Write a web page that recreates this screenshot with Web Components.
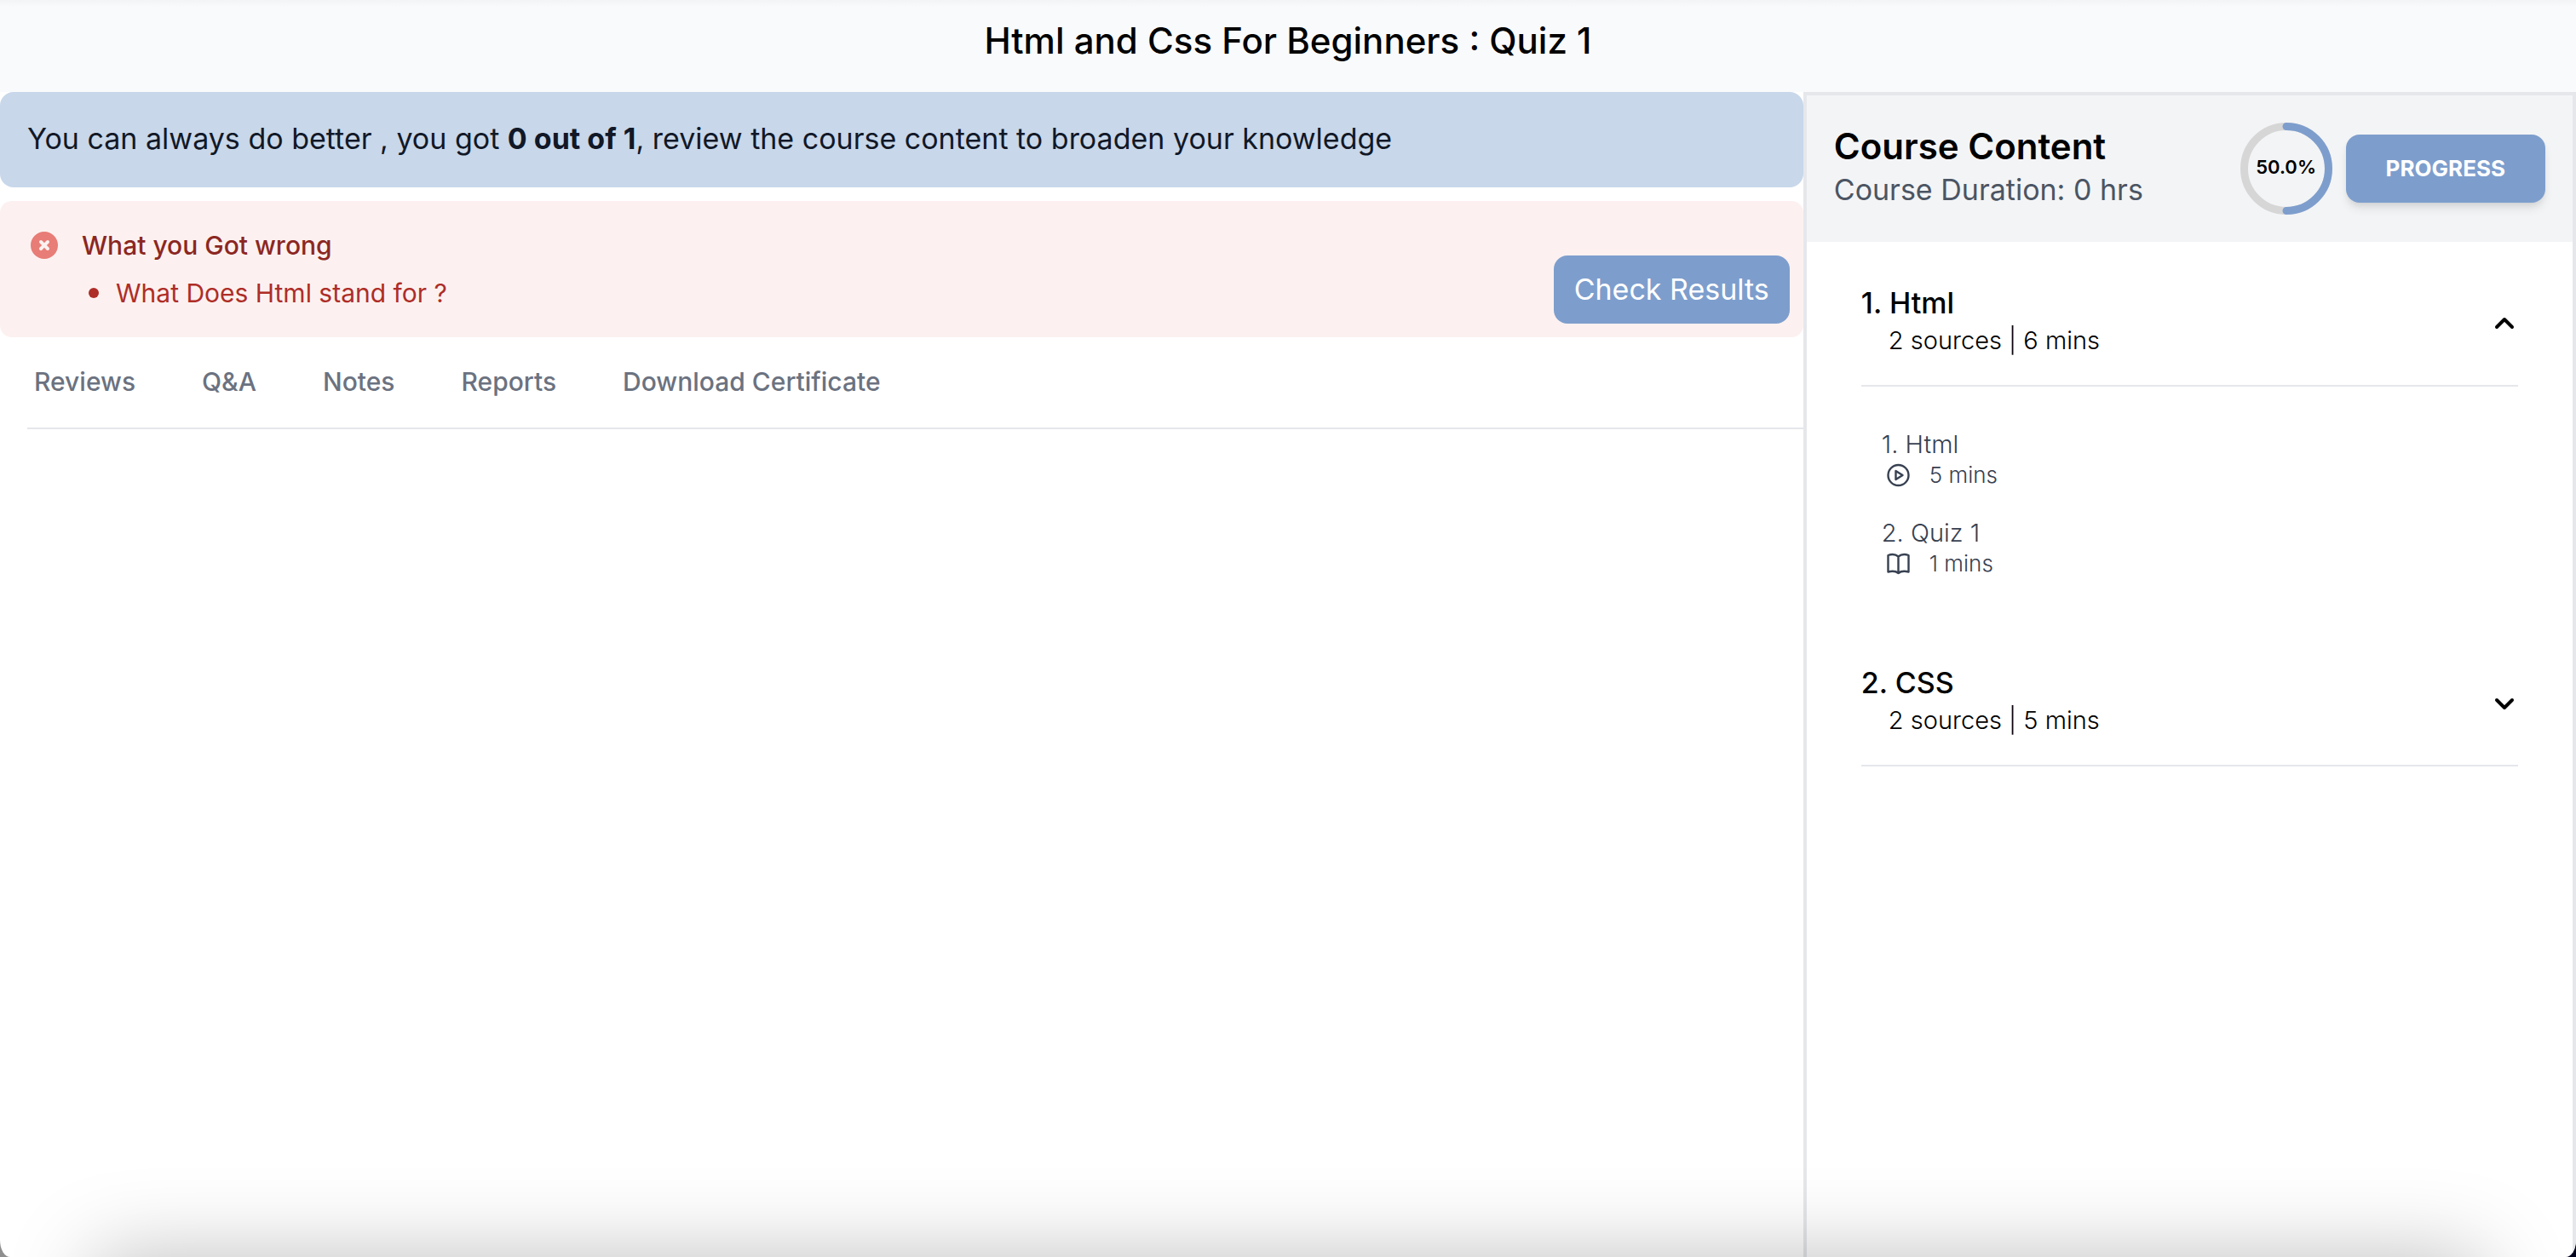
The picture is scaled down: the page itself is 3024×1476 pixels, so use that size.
<!DOCTYPE html>
<html lang="en">
<head>
<meta charset="utf-8">
<title>Html and Css For Beginners : Quiz 1</title>
<style>
  html { background: linear-gradient(90deg, #8f8f8f 50%, #02021f 50%); }
  body {
    margin: 0;
    font-family: Inter, "Open Sans", sans-serif;
    color: #000;
    --accent: #7d9ecd;
    --line: #e5e7eb;
    --t-xl: 42px;
    --t-lg: 34px;
    --t-md: 30px;
    --t-sm: 26px;
    --t-xs: 22px;
  }
</style>
</head>
<body>
<quiz-page></quiz-page>

<script>
const define = (name, html, setup) => {
  const template = document.createElement('template');
  template.innerHTML = html;
  customElements.define(name, class extends HTMLElement {
    connectedCallback() {
      if (this.shadowRoot) return;
      this.attachShadow({ mode: 'open' }).append(template.content.cloneNode(true));
      if (setup) setup(this, this.shadowRoot);
    }
  });
};

define('page-header', `
  <style>
    :host { display: block; background: linear-gradient(#f3f4f6, #f9fafc 8px); text-align: center; padding: 20px 0 32px; }
    h1 { margin: 0; font-size: var(--t-xl); line-height: 56px; font-weight: 500; }
  </style>
  <h1><slot></slot></h1>`);

define('score-banner', `
  <style>
    :host { display: block; background: #c8d7ea; color: #111827; border-radius: 16px; padding: 31px 32px 33px;
      font-size: var(--t-lg); line-height: 48px; }
  </style>
  <slot></slot>`);

define('wrong-answers', `
  <style>
    :host { display: flex; align-items: flex-end; justify-content: space-between;
      background: #fcf1f0; border-radius: 14px; margin-top: 16px; padding: 16px 16px 16px 32px; }
    .body { display: grid; grid-template-columns: 40px 1fr; column-gap: 24px; padding: 16px 0; }
    svg { width: 40px; height: 40px; }
    h2 { margin: 0; font-size: var(--t-md); line-height: 40px; font-weight: 500; color: #8b2722; }
    ul { grid-column: 2; list-style: none; margin: 16px 0 0; padding-left: 8px; font-size: var(--t-md); line-height: 40px; color: #ae2d27; }
    li { display: flex; align-items: center; gap: 20px; }
    li::before { content: ""; width: 12px; height: 12px; border-radius: 50%; background: currentColor; }
  </style>
  <div class="body">
    <svg viewBox="0 0 20 20" fill="#e87c76" aria-hidden="true"><path fill-rule="evenodd" clip-rule="evenodd" d="M10 18a8 8 0 100-16 8 8 0 000 16zM8.707 7.293a1 1 0 00-1.414 1.414L8.586 10l-1.293 1.293a1 1 0 101.414 1.414L10 11.414l1.293 1.293a1 1 0 001.414-1.414L11.414 10l1.293-1.293a1 1 0 00-1.414-1.414L10 8.586 8.707 7.293z"/></svg>
    <h2><slot name="title"></slot></h2>
    <ul><li><span><slot></slot></span></li></ul>
  </div>
  <slot name="action"></slot>`);

define('solid-button', `
  <style>
    :host { display: block; flex: none; }
    button { display: block; border: 0; margin: 0; border-radius: 16px; background: var(--accent); color: #fff;
      font: inherit; font-size: var(--t-lg); line-height: 48px; padding: 16px 24px; cursor: pointer; }
    :host([raised]) button { font-size: var(--t-sm); font-weight: 700; text-transform: uppercase; padding: 16px 47px;
      box-shadow: 0 8px 12px -2px rgb(0 0 0 / .1), 0 4px 8px -4px rgb(0 0 0 / .1); }
  </style>
  <button type="button"><slot></slot></button>`);

define('tab-bar', `
  <style>
    :host { display: block; margin-left: 32px; border-bottom: 2px solid var(--line); }
    nav { display: flex; gap: 78px; padding: 32px 8px 34px; }
    button { border: 0; margin: 0; padding: 0; background: none; color: #6b7280; cursor: pointer;
      font: inherit; font-size: var(--t-md); line-height: 40px; font-weight: 500; }
  </style>
  <nav aria-label="Course sections"></nav>`, (host, root) => {
  const nav = root.querySelector('nav');
  for (const label of host.getAttribute('tabs').split('|')) {
    const b = document.createElement('button');
    b.type = 'button';
    b.textContent = label;
    nav.append(b);
  }
});

define('progress-ring', `
  <style>
    :host { display: grid; place-items: center; flex: none; width: 108px; height: 108px; }
    svg, span { grid-area: 1 / 1; }
    svg { width: 108px; height: 108px; }
    span { font-size: var(--t-xs); font-weight: 600; line-height: 32px; margin-bottom: 4px; }
  </style>
  <svg viewBox="0 0 108 108" fill="none" stroke-width="9" aria-hidden="true">
    <circle cx="54" cy="54" r="49.5" stroke="#d6d6d6"/>
    <path d="M54 4.500a49.500 49.500 0 0 1 0 99" stroke="#7d9ecd" stroke-linecap="round"/>
  </svg>
  <span><slot></slot></span>`);

define('course-header', `
  <style>
    :host { display: flex; align-items: center; gap: 16px; background: #f3f4f6; padding: 32px; }
    .text { flex: 1; padding-bottom: 6px; }
    h2 { margin: 0; font-size: var(--t-xl); line-height: 56px; font-weight: 600; }
    p { margin: 0; font-size: var(--t-lg); line-height: 46px; color: #4b5563; }
  </style>
  <div class="text"><h2><slot name="title"></slot></h2><p><slot></slot></p></div>
  <slot name="aside"></slot>`);

define('course-section', `
  <style>
    :host { display: block; margin: 0 64px; }
    button { display: flex; width: 100%; align-items: center; justify-content: space-between; text-align: left;
      border: 0; border-bottom: 2px solid var(--line); background: none; color: #000; margin: 0; padding: 48px 0 32px; font: inherit; cursor: pointer; }
    .name { display: block; font-size: var(--t-lg); line-height: 48px; font-weight: 500; }
    .meta { display: block; font-size: 29px; line-height: 40px; font-weight: 300; padding-left: 32px; }
    svg { width: 32px; height: 32px; margin-top: 8px; }
    :host([open]) svg { transform: rotate(180deg); }
    .lessons { display: none; }
    :host([open]) .lessons { display: grid; gap: 32px; padding: 48px 24px 52px; }
  </style>
  <button type="button">
    <span><span class="name"></span><span class="meta"></span></span>
    <svg viewBox="0 0 32 32" fill="none" stroke="#000" stroke-width="4" stroke-linecap="round" stroke-linejoin="round" aria-hidden="true"><path d="M7 12l9 9 9-9"/></svg>
  </button>
  <div class="lessons"><slot></slot></div>`, (host, root) => {
  root.querySelector('.name').textContent = host.getAttribute('name');
  root.querySelector('.meta').textContent = host.getAttribute('meta');
  const b = root.querySelector('button');
  b.setAttribute('aria-expanded', host.hasAttribute('open'));
  b.addEventListener('click', () => b.setAttribute('aria-expanded', host.toggleAttribute('open')));
});

define('course-lesson', `
  <style>
    :host { display: block; color: #374151; font-weight: 300; }
    .name { font-size: 29px; line-height: 40px; }
    .meta { display: flex; align-items: center; gap: 20px; padding-left: 4px; font-size: var(--t-sm); line-height: 32px; }
    svg { width: 32px; height: 32px; display: none; fill: none; stroke: currentColor; stroke-linejoin: round; stroke-linecap: round; }
    :host([kind=video]) .video, :host([kind=quiz]) .quiz { display: block; }
  </style>
  <div class="name"><slot></slot></div>
  <div class="meta">
    <svg class="video" viewBox="0 0 32 32" stroke-width="2.4" aria-hidden="true"><circle cx="15.500" cy="16" r="12"/><path d="M12.500 11v10l8-5z"/></svg>
    <svg class="quiz" viewBox="0 0 32 32" stroke-width="2.4" aria-hidden="true"><path d="M15.500 7.500c-3-2.500-8-3-12-1.500v19.500c4-1 9-1 12 1.500 3-2.500 8-2.500 12-1.500V6c-4-1.500-9-1-12 1.500zV27"/></svg>
    <span></span>
  </div>`, (host, root) => {
  root.querySelector('.meta span').textContent = host.getAttribute('time');
});

define('quiz-page', `
  <style>
    :host { display: flex; flex-direction: column; min-height: 100vh; background: #fff; overflow: hidden;
      border-radius: 0 0 12px 12px / 0 0 20px 20px; }
    .columns { flex: 1; display: grid; grid-template-columns: 7fr 3fr; }
    aside { border: 4px solid var(--line); border-bottom: 0; }
    .shade { position: fixed; left: 110px; right: 110px; top: 100vh; height: 200px;
      box-shadow: 0 0 100px rgb(0 0 0 / .26); pointer-events: none; }
  </style>
  <page-header>Html and Css For Beginners : Quiz 1</page-header>
  <div class="columns">
    <main>
      <score-banner>You can always do better , you got <b>0 out of 1</b>, review the course content to broaden your knowledge</score-banner>
      <wrong-answers>
        <span slot="title">What you Got wrong</span>
        What Does Html stand for ?
        <solid-button slot="action">Check Results</solid-button>
      </wrong-answers>
      <tab-bar tabs="Reviews|Q&amp;A|Notes|Reports|Download Certificate"></tab-bar>
    </main>
    <aside>
      <course-header>
        <span slot="title">Course Content</span>
        Course Duration: 0 hrs
        <progress-ring slot="aside">50.0%</progress-ring>
        <solid-button slot="aside" raised>Progress</solid-button>
      </course-header>
      <course-section name="1. Html" meta="2 sources | 6 mins" open>
        <course-lesson kind="video" time="5 mins">1. Html</course-lesson>
        <course-lesson kind="quiz" time="1 mins">2. Quiz 1</course-lesson>
      </course-section>
      <course-section name="2. CSS" meta="2 sources | 5 mins"></course-section>
    </aside>
  </div>
  <div class="shade"></div>`);
</script>
</body>
</html>
